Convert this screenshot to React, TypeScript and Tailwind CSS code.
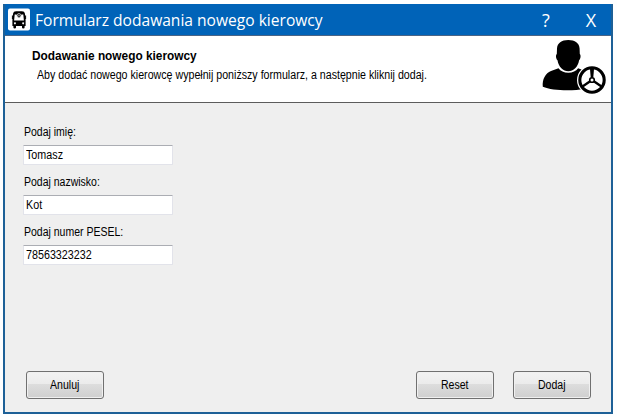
import React from "react";

function BusIcon() {
  return (
    <svg className="h-[23px] w-[22px]" viewBox="0 0 22 23">
      <rect x="0" y="0.5" width="22" height="22" rx="2" fill="#fff" />
      <path
        fillRule="evenodd"
        fill="#000"
        d="M8 3.300h6q2.600 0 2.900 2.200l.7 6v6.400h-1v1.600q0 1-1.300 1t-1.300-1v-1.600H8v1.600q0 1-1.300 1t-1.300-1v-1.600h-1v-6.400l.7-6Q5.400 3.300 8 3.300zM6.700 6.400L6.100 12.400h9.800l-.6-6h-1.700l-2.600 3.500-2.600-3.500zM6.900 14.200a1 1 0 1 0 .1 0zM15.100 14.200a1 1 0 1 0 .1 0z"
      />
      <rect x="3.900" y="7.500" width="1" height="3.500" fill="#000" />
      <rect x="17.100" y="7.500" width="1" height="3.500" fill="#000" />
      <circle cx="11" cy="7.500" r="2" fill="#222" stroke="#ccc" strokeWidth=".8" />
      <circle cx="11" cy="7.300" r=".6" fill="#ddd" />
    </svg>
  );
}

function DriverIcon() {
  return (
    <svg className="h-[56px] w-[65px]" viewBox="0 0 65 56">
      <path
        fill="#000"
        d="M26.300 2C33 2 37.300 5 37.600 10.500L37.800 16c1.300 1 .9 4.800-.7 6.300C36 29 31.500 33.300 26.300 33.300S16.600 29 15.500 22.300c-1.600-1.500-2-5.300-.7-6.300l.2-5.500C15.300 5 19.600 2 26.300 2z"
      />
      <path
        fill="#000"
        d="M16.500 30.200C18.500 33 22 34.700 26.300 34.700s7.800-1.700 9.800-4.500L42 32.600V50.800C31 53.300 10 52.800.8 48.800 0 41.500 3.500 35 9 33z"
      />
      <circle cx="50" cy="42" r="15" fill="#fff" />
      <circle cx="50" cy="42" r="12.200" fill="#fff" stroke="#000" strokeWidth="3.100" />
      <path d="M50 30v11M50 42l-9.500 6.500M50 42l9.500 6.500" stroke="#000" strokeWidth="2.300" fill="none" />
      <path d="M48 31h4l-.8 8h-2.400z" fill="#000" />
      <circle cx="50" cy="42" r="2.300" fill="#fff" stroke="#000" strokeWidth="1.600" />
    </svg>
  );
}

function Field({ label, value }: { label: string; value: string }) {
  return (
    <div className="flex h-[50px] flex-col">
      <label className="h-[20px] text-[12px] leading-[14px]">
        <span className="inline-block origin-left scale-x-[0.875] whitespace-nowrap">{label}</span>
      </label>
      <div className="-ml-px flex h-[20px] w-[150px] items-center rounded-[1px] border border-[#e2e3ea] border-t-[#abadb3] bg-white pl-[2px]">
        <input
          defaultValue={value}
          className="h-[14px] w-[164px] shrink-0 origin-left scale-x-[0.895] bg-transparent text-[12px] leading-[14px] outline-none"
        />
      </div>
    </div>
  );
}

function Button({ text }: { text: string }) {
  return (
    <button className="flex h-[28px] w-[78px] items-center justify-center rounded-[3px] border border-[#707070] bg-[linear-gradient(#f2f2f2_0%,#ebebeb_46%,#dddddd_46%,#cfcfcf_100%)] text-[12px] leading-[14px] shadow-[inset_0_0_0_1px_#f0f0f0]">
      <span className="mr-px scale-x-[0.88]">{text}</span>
    </button>
  );
}

export default function App() {
  return (
    <div className="h-[417px] w-[617px] overflow-hidden bg-[#fdfeff] pl-[3px] pt-[4px] font-['Liberation_Sans',Arial,sans-serif] text-black">
      <div className="flex h-[410px] w-[610px] flex-col border-2 border-t-0 border-[#1d6097] bg-[#efefef]">
        <div className="flex h-[32px] shrink-0 items-center border-b border-[#4b6485] bg-[#0063b8] pl-[3px] text-white">
          <BusIcon />
          <div className="ml-[5px] w-[501px] font-['Open_Sans','Noto_Sans',sans-serif] text-[16.500px] leading-[20px]">
            <span className="inline-block origin-left scale-x-[0.944] whitespace-nowrap">Formularz dodawania nowego kierowcy</span>
          </div>
          <button className="w-[20px] font-['Open_Sans',sans-serif] text-[18px] leading-[20px]">?</button>
          <button className="ml-[25px] w-[20px] font-['Open_Sans',sans-serif] text-[18px] leading-[20px]">X</button>
        </div>
        <div className="flex h-[67px] shrink-0 justify-between border-b border-[#5c5c5c] bg-white pl-[27px] pr-[4px]">
          <div className="pt-[12px] text-[12px] leading-[16px]">
            <h1 className="font-bold leading-[16px]">
              <span className="inline-block origin-left scale-x-[0.988] whitespace-nowrap">Dodawanie nowego kierowcy</span>
            </h1>
            <p className="mt-[3px] pl-[5px]">
              <span className="inline-block origin-left scale-x-[0.887] whitespace-nowrap">
                Aby dodać nowego kierowcę wypełnij poniższy formularz, a następnie kliknij dodaj.
              </span>
            </p>
          </div>
          <div className="pt-[2px]">
            <DriverIcon />
          </div>
        </div>
        <form className="flex-1 pl-[19px] pt-[22px]">
          <Field label="Podaj imię:" value="Tomasz" />
          <Field label="Podaj nazwisko:" value="Kot" />
          <Field label="Podaj numer PESEL:" value="78563323232" />
        </form>
        <div className="flex h-[41px] shrink-0 items-start pl-[21px] pr-[20px]">
          <Button text="Anuluj" />
          <div className="ml-auto flex gap-[19px]">
            <Button text="Reset" />
            <Button text="Dodaj" />
          </div>
        </div>
      </div>
    </div>
  );
}
